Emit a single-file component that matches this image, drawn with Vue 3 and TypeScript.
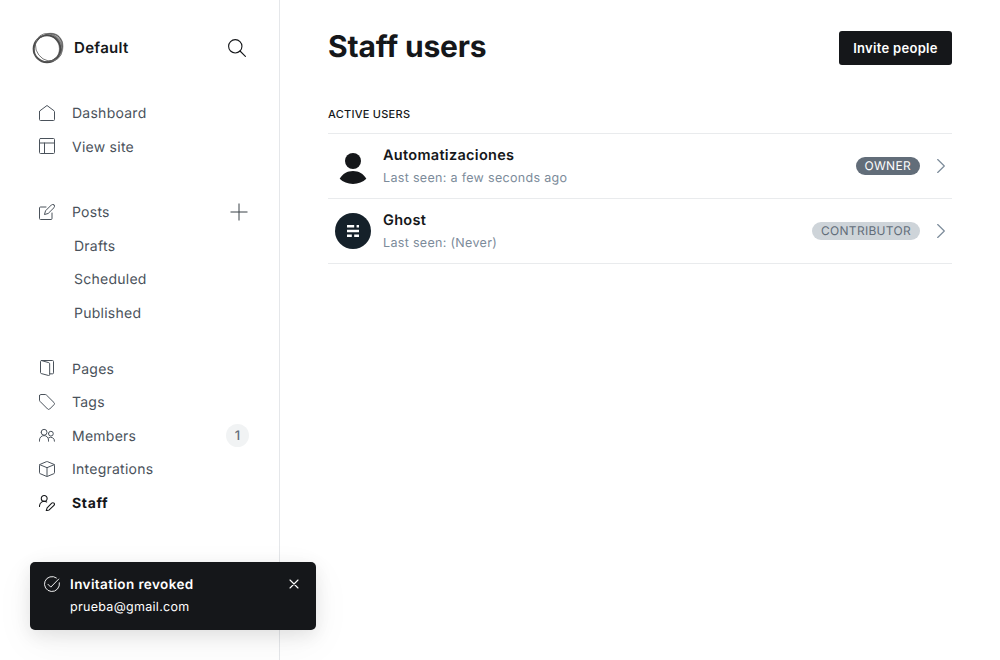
<script setup lang="ts">
interface NavItem {
  label: string
  icon: string
  active?: boolean
  count?: number
  add?: boolean
  children?: string[]
}

interface StaffUser {
  name: string
  seen: string
  role: string
  kind: 'owner' | 'contributor'
}

const groups: NavItem[][] = [
  [
    { label: 'Dashboard', icon: 'home' },
    { label: 'View site', icon: 'layout' },
  ],
  [{ label: 'Posts', icon: 'compose', add: true, children: ['Drafts', 'Scheduled', 'Published'] }],
  [
    { label: 'Pages', icon: 'pages' },
    { label: 'Tags', icon: 'tag' },
    { label: 'Members', icon: 'members', count: 1 },
    { label: 'Integrations', icon: 'box' },
    { label: 'Staff', icon: 'staff', active: true },
  ],
]

const icons: Record<string, string[]> = {
  home: ['M.75 9.9v11.85a1.5 1.5 0 0 0 1.5 1.5h19.5a1.5 1.5 0 0 0 1.5-1.5V9.9a1.5 1.5 0 0 0-.55-1.15L12 .75 1.3 8.75A1.5 1.5 0 0 0 .75 9.9Z'],
  layout: ['M2.25.75h19.5a1.5 1.5 0 0 1 1.5 1.5v19.5a1.5 1.5 0 0 1-1.5 1.5H2.25a1.5 1.5 0 0 1-1.5-1.5V2.25a1.5 1.5 0 0 1 1.5-1.5Z', 'M.75 7.5h22.5', 'M8.25 7.5v15.75'],
  compose: ['M22.6 1.4a2.8 2.8 0 0 0-4 0L9.8 10.2 8.2 15.8l5.6-1.6 8.8-8.8a2.8 2.8 0 0 0 0-4Z', 'M19.5 13.5v8.25a1.5 1.5 0 0 1-1.5 1.5H2.25a1.5 1.5 0 0 1-1.5-1.5V6a1.5 1.5 0 0 1 1.5-1.5h8.25'],
  pages: ['M3.5.75h16.75a1.5 1.5 0 0 1 1.5 1.5v17a1.5 1.5 0 0 1-1.5 1.5H16', 'M3.6.8 14.7 4A1.8 1.8 0 0 1 16 5.7v16a1.5 1.5 0 0 1-1.9 1.5L3.3 20.3a1.5 1.5 0 0 1-1.05-1.4V2.2A1.5 1.5 0 0 1 3.6.8Z'],
  tag: ['M.75 2.7v6.4a3 3 0 0 0 .9 2.1l11.3 11.3a2.2 2.2 0 0 0 3.1 0l6.5-6.5a2.2 2.2 0 0 0 0-3.1L11.2 1.6A3 3 0 0 0 9.1.75H2.7A1.95 1.95 0 0 0 .75 2.7Z'],
  members: ['M3.2 7.9a4.4 4.4 0 1 0 8.8 0 4.4 4.4 0 1 0-8.8 0', 'M.75 21.3v-1.7a6.75 6.75 0 0 1 13.5 0v1.7', 'M14.2 10a3.6 3.6 0 1 0 7.2 0 3.6 3.6 0 1 0-7.2 0', 'M14.5 16.2a5.7 5.7 0 0 1 8.75 5.1'],
  box: ['M11.4.9a1.5 1.5 0 0 1 1.2 0l9.7 4.1a1.5 1.5 0 0 1 .95 1.4v11.2a1.5 1.5 0 0 1-.95 1.4l-9.7 4.1a1.5 1.5 0 0 1-1.2 0L1.7 19a1.5 1.5 0 0 1-.95-1.4V6.4A1.5 1.5 0 0 1 1.7 5Z', 'M1.1 5.5 12 10l10.9-4.5', 'M12 10v13.2'],
  staff: ['M3.4 5.2a4.4 4.4 0 1 0 8.8 0 4.4 4.4 0 1 0-8.8 0', 'M.75 17.25v-.75a7.1 7.1 0 0 1 10.8-6', 'M22.5 12.3a2.4 2.4 0 0 0-3.4 0l-6.9 6.9-1.3 4.3 4.4-1.1 7.1-6.9a2.3 2.3 0 0 0 .1-3.2Z'],
}

const users: StaffUser[] = [
  { name: 'Automatizaciones', seen: 'a few seconds ago', role: 'Owner', kind: 'owner' },
  { name: 'Ghost', seen: '(Never)', role: 'Contributor', kind: 'contributor' },
]
</script>

<template>
  <div class="app">
    <aside class="sidebar">
      <header class="brand">
        <svg class="logo" viewBox="0 0 32 32" fill="none">
          <path fill="#a0a0a0" d="M13 2C18-.2 25 .8 28 5c4 4 4.200 10.500 2.300 15.500C28 26 23 30.500 17 30.500c6-3 10-7.500 9.900-14C26.800 9 21 4 13 2Z" />
          <circle cx="15" cy="16.800" r="13.400" stroke="#4a4a4a" stroke-width="1.900" />
          <ellipse cx="16.800" cy="15.300" rx="14.500" ry="12.600" transform="rotate(52 16.800 15.300)" stroke="#777" stroke-width="0.900" />
          <ellipse cx="16.200" cy="15.700" rx="15.300" ry="12.900" transform="rotate(-42 16.200 15.700)" stroke="#555" stroke-width="0.900" />
        </svg>
        <span class="site">Default</span>
        <svg class="search" viewBox="0 0 24 24" fill="none" stroke="#15171a" stroke-width="1.500" stroke-linecap="round">
          <circle cx="9.700" cy="9.700" r="8.900" />
          <path d="m16 16 7.200 7.200" />
        </svg>
      </header>
      <nav class="nav">
        <ul v-for="(group, gi) in groups" :key="gi" class="group">
          <li v-for="item in group" :key="item.label">
            <a class="link" :class="{ active: item.active }">
              <svg class="icon" viewBox="0 0 24 24">
                <path v-for="d in icons[item.icon]" :key="d" :d="d" />
              </svg>
              <span class="label">{{ item.label }}</span>
              <span v-if="item.count" class="count">{{ item.count }}</span>
              <svg v-if="item.add" class="plus" viewBox="0 0 18 18"><path d="M9 .5v17M.5 9h17" /></svg>
            </a>
            <a v-for="child in item.children" :key="child" class="link child">
              <span class="label">{{ child }}</span>
            </a>
          </li>
        </ul>
      </nav>
    </aside>

    <main class="main">
      <header class="heading">
        <h1>Staff users</h1>
        <button class="invite">Invite people</button>
      </header>
      <h2>Active users</h2>
      <section class="list">
        <article v-for="user in users" :key="user.name" class="user">
          <svg v-if="user.kind === 'owner'" class="avatar" viewBox="0 0 36 36" fill="#15171a">
            <circle cx="18" cy="13" r="8" />
            <path d="M4.700 30.800C7.600 25.700 12.400 23 18 23s10.400 2.700 13.300 7.800C28 34 23.300 36 18 36S8 34 4.700 30.800Z" />
          </svg>
          <svg v-else class="avatar" viewBox="0 0 36 36">
            <circle cx="18" cy="18" r="18" fill="#15212a" />
            <path fill="#fff" d="M12 12h7.200v2.400H12zM21.600 12H24v2.400h-2.400zM12 16.800h12v2.400H12zM12 21.600h4.800V24H12zM19.200 21.600H24V24h-4.800z" />
          </svg>
          <div class="info">
            <h3>{{ user.name }}</h3>
            <p>Last seen: {{ user.seen }}</p>
          </div>
          <span class="role" :class="user.kind">{{ user.role }}</span>
          <svg class="chevron" viewBox="0 0 8 14"><path d="m.7.5 6.600 6.500L.7 13.500" /></svg>
        </article>
      </section>
    </main>

    <div class="toast">
      <svg class="check" viewBox="0 0 24 24">
        <path d="m6 12.500 4.200 4.200L22 4.600" />
        <path d="M23.100 10.200A11.250 11.250 0 1 1 18.600 2.900" />
      </svg>
      <div class="message">
        <strong>Invitation revoked</strong>
        <p>prueba@gmail.com</p>
      </div>
      <svg class="close" viewBox="0 0 10 10"><path d="m1 1 8 8M9 1 1 9" /></svg>
    </div>
  </div>
</template>

<style>
body {
  margin: 0;
  background: #fff;
}
</style>

<style scoped>
* {
  box-sizing: border-box;
}
.app {
  display: flex;
  height: 660px;
  overflow: hidden;
  color: #15171a;
  font-family: Inter, "Liberation Sans", sans-serif;
  text-rendering: geometricPrecision;
}
h1, h2, h3, p, ul {
  margin: 0;
  padding: 0;
}
svg {
  flex: none;
}
.sidebar {
  width: 280px;
  flex: none;
  border-right: 1px solid #e5e7ea;
}
.brand {
  display: flex;
  align-items: center;
  height: 96px;
  padding: 0 33px 0 32px;
}
.logo {
  width: 32px;
  height: 32px;
}
.site {
  flex: 1;
  margin: -2px 0 0 10px;
  font-size: 15px;
  font-weight: 600;
  letter-spacing: 0.3px;
}
.search {
  width: 18px;
  height: 18px;
}
.group {
  list-style: none;
  margin-bottom: 32px;
}
.group:nth-child(2) {
  margin-bottom: 22.5px;
}
.link {
  display: flex;
  align-items: center;
  height: 33.5px;
  padding: 0 30px 0 39px;
  color: #4a525b;
  font-size: 14px;
  line-height: 17px;
  letter-spacing: 0.25px;
}
.label {
  padding-top: 2px;
}
.child {
  padding-left: 74px;
}
.icon {
  width: 16px;
  height: 16px;
  margin-right: 17px;
  fill: none;
  stroke: #4a525b;
  stroke-width: 1.5;
  stroke-linejoin: round;
  stroke-linecap: round;
}
.active {
  color: #15171a;
  font-weight: 700;
  letter-spacing: 0.65px;
}
.active .icon {
  margin-top: 1px;
  stroke: #15171a;
  stroke-width: 1.6;
}
.count {
  display: grid;
  place-items: center;
  width: 23px;
  height: 23px;
  margin-left: auto;
  padding-top: 2px;
  border-radius: 50%;
  background: #f1f3f4;
  color: #626d79;
  font-size: 13px;
  font-weight: 500;
  letter-spacing: 0;
}
.plus {
  width: 18px;
  height: 18px;
  margin: 0 1px 0 auto;
  stroke: #394047;
}
.main {
  flex: 1;
  padding: 0 48px;
}
.heading {
  display: flex;
  align-items: center;
  justify-content: space-between;
  height: 96px;
}
h1 {
  font-size: 30px;
  font-weight: 700;
  line-height: 36px;
  letter-spacing: -0.17px;
  margin-top: -3px;
}
.invite {
  width: 113px;
  height: 34px;
  padding: 0;
  border: 0;
  border-radius: 3px;
  background: #15171a;
  color: #fff;
  font: 600 13px Inter, sans-serif;
  letter-spacing: 0.3px;
}
h2 {
  height: 37px;
  padding-top: 10px;
  font-size: 11px;
  font-weight: 450;
  line-height: 16px;
  letter-spacing: 0.26px;
  text-transform: uppercase;
}
.list {
  border-top: 1px solid #e9ebed;
}
.user {
  display: flex;
  align-items: center;
  height: 65px;
  padding: 0 7px;
  border-bottom: 1px solid #e9ebed;
}
.avatar {
  width: 36px;
  height: 36px;
}
.info {
  flex: 1;
  margin: 2px 0 0 12px;
}
h3 {
  font-size: 14.5px;
  font-weight: 600;
  line-height: 23px;
  letter-spacing: 0.3px;
}
.info p {
  color: #7c8b9a;
  font-size: 12.5px;
  line-height: 23px;
  letter-spacing: 0.32px;
}
.role {
  height: 18px;
  margin-right: 17px;
  padding: 0 9px;
  border-radius: 9px;
  font-size: 12px;
  line-height: 18px;
  letter-spacing: 0.3px;
  text-transform: uppercase;
}
.owner {
  background: #626d79;
  color: #fff;
}
.contributor {
  background: #ced4d9;
  color: #626d79;
}
.chevron {
  width: 8px;
  height: 14px;
  fill: none;
  stroke: #7c8b9a;
  stroke-width: 1.2;
  stroke-linecap: round;
  stroke-linejoin: round;
}
.toast {
  position: absolute;
  left: 30px;
  bottom: 30px;
  display: flex;
  width: 286px;
  height: 68px;
  padding: 11px 17px 0 14px;
  border-radius: 5px;
  background: #15171a;
  color: #fff;
  box-shadow: 0 0 1px rgba(0, 0, 0, 0.05), 0 5px 18px rgba(0, 0, 0, 0.09), 0 12px 40px rgba(0, 0, 0, 0.05);
}
.check {
  width: 16px;
  height: 16px;
  margin: 3px 10px 0 0;
  fill: none;
  stroke: #fff;
  stroke-width: 1.4;
  stroke-linecap: round;
  stroke-linejoin: round;
}
.message {
  flex: 1;
  padding-top: 1px;
}
.message strong {
  display: block;
  font-size: 13.5px;
  font-weight: 600;
  line-height: 22px;
  letter-spacing: 0.4px;
}
.message p {
  font-size: 12.5px;
  line-height: 23px;
  letter-spacing: 0.3px;
}
.close {
  width: 10px;
  height: 10px;
  margin-top: 6px;
  stroke: #fff;
  stroke-width: 1.1;
  stroke-linecap: round;
}
</style>
